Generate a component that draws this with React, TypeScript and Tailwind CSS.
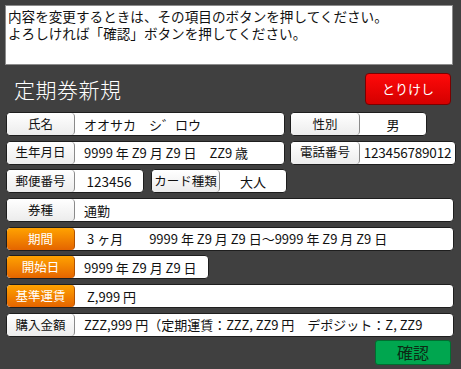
import React from "react";

const font = { fontFamily: '"Noto Sans CJK JP", "Noto Sans", sans-serif' };

function Field({
  label,
  value,
  lw,
  vw,
  orange = false,
  center = false,
  vcls = "",
}: {
  label: string;
  value: string;
  lw: string;
  vw: string;
  orange?: boolean;
  center?: boolean;
  vcls?: string;
}) {
  return (
    <div className="flex h-[24px] shrink-0 rounded-[4px] border border-[#1e1e1e] bg-white overflow-hidden">
      <div
        className={
          lw +
          " flex items-center justify-center rounded-[4px] border-r text-[12.5px] leading-none " +
          (orange
            ? "border-[#b05000] bg-gradient-to-b from-[#ffa200] to-[#e46400] text-white"
            : "border-[#8a8a8a] bg-gradient-to-b from-white to-[#ececec] text-[#111]")
        }
      >
        {label}
      </div>
      <div
        className={
          vw +
          " flex items-center whitespace-pre leading-none text-[#111] " +
          (center ? "justify-center" : "pl-[9px]") +
          " " +
          vcls
        }
      >
        {value}
      </div>
    </div>
  );
}

export default function App() {
  return (
    <div className="w-[461px] h-[369px] bg-[#404040] overflow-hidden" style={font}>
      <div className="pt-[5px] pl-[5px]">
        <div className="w-[448px] h-[60px] bg-white border border-[#8c8c8c] pl-[2px] pt-[2px] text-[13.6px] leading-[16.5px] text-[#111]">
          <div>内容を変更するときは、その項目のボタンを押してください。</div>
          <div>よろしければ「確認」ボタンを押してください。</div>
        </div>
      </div>

      <div className="mt-[8px] flex items-center justify-between pl-[14px] pr-[10px] h-[32px]">
        <div className="text-[21px] leading-none text-white font-light tracking-[0.5px]">定期券新規</div>
        <div className="w-[86px] h-[32px] rounded-[4px] border border-[#7a0000] bg-gradient-to-b from-[#ff0a0a] to-[#d40000] flex items-center justify-center text-[13px] text-white">
          とりけし
        </div>
      </div>

      <div className="mt-[7px] pl-[6px] flex flex-col gap-[4.7px]">
        <div className="flex gap-[5px]">
          <Field label="氏名" value="オオサカ　シ゛ロウ" lw="w-[68px]" vw="w-[209px]" vcls="text-[13px]" />
          <Field label="性別" value="男" lw="w-[69px]" vw="w-[66px]" center vcls="text-[13px]" />
        </div>
        <div className="flex gap-[5px]">
          <Field label="生年月日" value="9999 年 Z9 月 Z9 日　ZZ9 歳" lw="w-[68px]" vw="w-[209px]" vcls="text-[13px]" />
          <Field label="電話番号" value="123456789012" lw="w-[69px]" vw="w-[95px]" center vcls="text-[13.5px] tracking-[-0.2px]" />
        </div>
        <div className="flex gap-[7px]">
          <Field label="郵便番号" value="123456" lw="w-[68px]" vw="w-[68px]" center vcls="text-[13.5px]" />
          <Field label="カード種類" value="大人" lw="w-[68px]" vw="w-[66px]" center vcls="text-[13px]" />
        </div>
        <div className="flex">
          <Field label="券種" value="通勤" lw="w-[68px]" vw="w-[378px]" vcls="text-[13px]" />
        </div>
        <div className="flex">
          <Field
            label="期間"
            value="3 ヶ月　　9999 年 Z9 月 Z9 日～9999 年 Z9 月 Z9 日"
            lw="w-[68px]"
            vw="w-[378px]"
            orange
            vcls="!pl-[12px] text-[13px]"
          />
        </div>
        <div className="flex">
          <Field label="開始日" value="9999 年 Z9 月 Z9 日" lw="w-[68px]" vw="w-[133px]" orange vcls="text-[13px]" />
        </div>
        <div className="flex">
          <Field label="基準運賃" value="Z,999 円" lw="w-[68px]" vw="w-[378px]" orange vcls="!pl-[12px] text-[13px]" />
        </div>
        <div className="flex">
          <Field
            label="購入金額"
            value="ZZZ,999 円（定期運賃：ZZZ, ZZ9 円　デポジット：Z, ZZ9"
            lw="w-[68px]"
            vw="w-[378px]"
            vcls="text-[13px]"
          />
        </div>
      </div>

      <div className="mt-[3px] flex justify-end pr-[10px]">
        <div className="w-[76px] h-[25px] rounded-[3px] bg-[#00a64f] border border-[#006e30] flex items-center justify-center text-[16px] leading-none text-[#0c2a14]">
          確認
        </div>
      </div>
    </div>
  );
}
